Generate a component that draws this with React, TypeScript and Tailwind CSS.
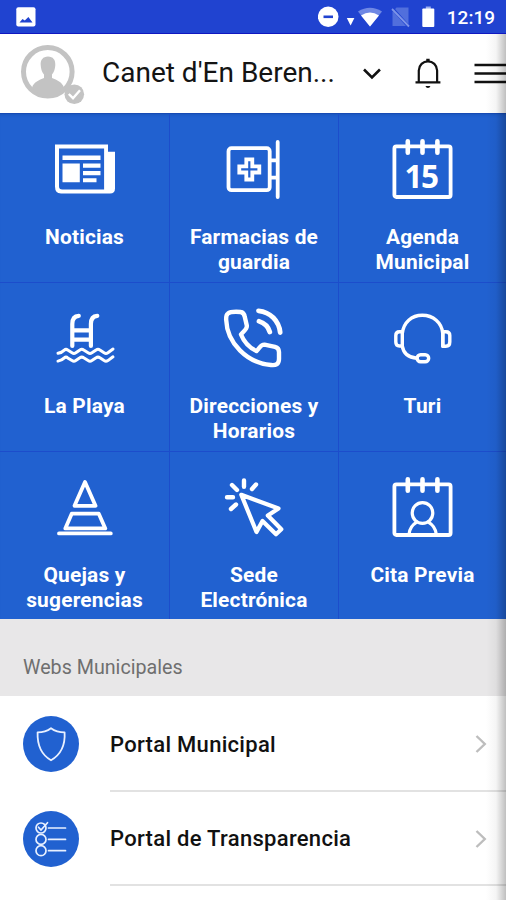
import React from "react";

const Icon = ({ children }: { children: React.ReactNode }) => (
    <svg
        width="64"
        height="64"
        viewBox="0 0 64 64"
        fill="none"
        stroke="white"
        strokeWidth="3.8"
        strokeLinecap="round"
        strokeLinejoin="round"
        className="shrink-0"
    >
        {children}
    </svg>
);

const CalendarFrame = () => (
    <>
        <rect x="3.4" y="9.4" width="56.2" height="50.6" rx="2" />
        <path d="M16.8 4.2v11.5M31.5 4.2v11.5M46.4 4.2v11.5" strokeWidth="4.6" />
    </>
);

const NewsIcon = () => (
    <Icon>
        <path
            d="M2 7.4H55V14.8H62V51.6Q62 56.6 57 56.6H8Q2 56.6 2 49.6ZM6 11.6V49.3Q6 52.6 9.3 52.6H51.1V11.6Z"
            fill="white"
            fillRule="evenodd"
            stroke="none"
        />
        <path
            d="M9.5 18.6H47.5v4.4H9.5ZM9.5 26.6H26.8V45.2H9.5ZM30 26.6H47.5v4.2H30ZM30 34H47.5v4.2H30ZM30 41.3H43.5v4H30Z"
            fill="white"
            stroke="none"
        />
    </Icon>
);

const PharmacyIcon = () => (
    <Icon>
        <rect x="6.5" y="11.2" width="41.2" height="42" rx="3" />
        <path d="M24.3 22.3h6v7h7v6.2h-7v7h-6v-7h-7v-6.2h7Z" strokeLinejoin="miter" />
        <path d="M55.7 5v55M48 23.3h7M48 40.7h7" />
    </Icon>
);

const AgendaIcon = () => (
    <Icon>
        <CalendarFrame />
        <text
            x="30"
            y="51.3"
            textAnchor="middle"
            fill="white"
            stroke="none"
            className="font-['Open_Sans',sans-serif] text-[31.5px] font-bold tracking-[-1.6px]"
        >
            15
        </text>
    </Icon>
);

const BeachIcon = () => (
    <Icon>
        <g transform="translate(-0.5 0)">
            <path d="M19.8 40V18C19.8 13 22 10.2 26.3 9.9M38.4 40V18C38.4 13 40.6 10.2 44.8 9.9M20 24.3h18M20 33.7h18" strokeWidth="4.2" />
            <path
                d="M5.5 47.3Q9.5 46.5 11.8 44.1 13.5 42.5 15.2 44.1L19.5 46.8Q21.4 48 23.3 46.8L27.4 44Q29.3 42.6 31.2 44L35.6 46.8Q37.5 48 39.4 46.8L43.6 44Q45.5 42.6 47.4 44L51.6 46.8Q53.5 48 55.4 46.8L60.5 43"
                strokeWidth="3"
            />
            <path
                d="M5.5 55.1Q9.5 54.3 11.8 51.9 13.5 50.3 15.2 51.9L19.5 54.6Q21.4 55.8 23.3 54.6L27.4 51.8Q29.3 50.4 31.2 51.8L35.6 54.6Q37.5 55.8 39.4 54.6L43.6 51.8Q45.5 50.4 47.4 51.8L51.6 54.6Q53.5 55.8 55.4 54.6L60.5 50.8"
                strokeWidth="3"
            />
        </g>
    </Icon>
);

const PhoneIcon = () => (
    <Icon>
        <path
            d="M5.8 7.7C8 5.8 14 5.6 18.5 6 21.5 6.3 22.3 8 22.8 11L24.8 19.5C25.5 23.5 21 25.5 19 28.5 22 36 28 42 34.5 45 38 42 38.5 38.3 42.5 38.6L53 40.8C56 41.6 57 43 57 46V53C57 58 54 59.6 49 59 25 57 5 37 4.2 14 4 11 4 9 5.8 7.7Z"
            strokeWidth="4.4"
        />
        <path d="M36.5 4.8C48.5 6 57 15 58.2 26.5M37 15.3C42.5 17 46.3 20.8 47.8 26" strokeWidth="4.8" />
    </Icon>
);

const HeadsetIcon = () => (
    <Icon>
        <g strokeWidth="3.4" transform="translate(-0.5 0)">
            <path d="M11.8 41V27.5C13 16.5 21 9.3 31.8 9.3S51.3 16.5 52.3 27.5V40.2" />
            <path d="M11.8 25.7H9Q5.3 25.7 5.3 29.5V36Q5.3 40 9 40H11.8C12.8 47 17 51.5 26.5 52.2" />
            <path d="M52.3 25.7H55.3Q59.3 25.7 59.3 29.5V36Q59.3 40.2 55.3 40.2H52.3Z" />
            <rect x="26.6" y="48.8" width="11.6" height="7" rx="3.5" />
        </g>
    </Icon>
);

const ConeIcon = () => (
    <Icon>
        <path d="M32 7L42.5 30.8H21.5ZM18.7 38.7H45.8L52.3 53.4H12.3ZM6 58.4H57.8" />
    </Icon>
);

const ClickIcon = () => (
    <Icon>
        <path
            d="M5 22.3h6M10 10l5 5M22 5.5v6.2M34 9.5l-4 4.5M9 34l5-4.5"
            strokeWidth="4.4"
        />
        <path d="M19.3 19.8L56.5 33.5 45.8 40.5 59.3 54.2 54 59.3 40.5 46 34.5 57Z" strokeWidth="4.2" />
    </Icon>
);

const AppointmentIcon = () => (
    <Icon>
        <CalendarFrame />
        <circle cx="31.5" cy="38" r="10.3" strokeWidth="3.2" />
        <path d="M18 59.4C18.5 53.9 21.2 49.9 25.7 47.2M45.3 59.4C44.7 53.9 41.9 49.9 37.4 47.2" strokeWidth="3.2" />
    </Icon>
);

const services = [
    { lines: ["Noticias"], icon: NewsIcon },
    { lines: ["Farmacias de", "guardia"], icon: PharmacyIcon },
    { lines: ["Agenda", "Municipal"], icon: AgendaIcon },
    { lines: ["La Playa"], icon: BeachIcon },
    { lines: ["Direcciones y", "Horarios"], icon: PhoneIcon },
    { lines: ["Turi"], icon: HeadsetIcon },
    { lines: ["Quejas y", "sugerencias"], icon: ConeIcon },
    { lines: ["Sede", "Electrónica"], icon: ClickIcon },
    { lines: ["Cita Previa"], icon: AppointmentIcon },
];

const ShieldIcon = () => (
    <svg width="56" height="56" viewBox="0 0 56 56" fill="none" stroke="#e8f0ff" strokeWidth="1.8" strokeLinejoin="round">
        <path d="M28 12.2C24 15.2 19.5 16.4 14.6 16.4 14.2 28 18 38.5 28 44.3 38 38.5 42.3 28 41.6 16.4 36.5 16.4 32 15.2 28 12.2Z" />
    </svg>
);

const ChecklistIcon = () => (
    <svg width="56" height="56" viewBox="0 0 56 56" fill="none" stroke="#e8f0ff" strokeWidth="1.7" strokeLinecap="round">
        <circle cx="18" cy="17" r="5" />
        <circle cx="18" cy="28.4" r="5" />
        <circle cx="18" cy="39.7" r="5" />
        <path d="M15.5 16.2L18 19 24.5 11.7M25.5 17H42.5M25.5 28.4H42.5M25.5 39.7H42.5" />
    </svg>
);

const links = [
    { title: "Portal Municipal", icon: ShieldIcon },
    { title: "Portal de Transparencia", icon: ChecklistIcon },
];

function StatusBar() {
    return (
        <div className="flex h-[34px] items-center justify-between border-b border-[#1018c0] bg-[#2043d0] pl-4 pr-[11px] pt-px">
            <svg width="20" height="20" viewBox="0 0 20 20">
                <rect x="0.3" y="0.3" width="19.2" height="19.2" rx="2" fill="white" />
                <path d="M3.5 15.5L6.5 12l2.3 1.5L12.4 10 16.5 15.5Z" fill="#2043d0" />
            </svg>
            <div className="flex items-center">
                <svg width="118" height="24" viewBox="0 0 118 24">
                    <circle cx="10.2" cy="11.8" r="10.3" fill="white" />
                    <path d="M5.5 11.8h9.5" stroke="#2043d0" strokeWidth="2.6" />
                    <path d="M28.8 13h7.6l-3.8 7.5Z" fill="white" />
                    <path d="M40 6.5Q52 -1 64 6.5L52 21.5Z" fill="#6f88e4" />
                    <path d="M43 10.5Q52 4.5 61 10.5L52 21.5Z" fill="white" />
                    <path d="M78.5 2.5h12v18.5H74.5V7Z" fill="#516fdc" />
                    <path d="M74 3L90.5 21.5" stroke="#2043d0" strokeWidth="3.2" />
                    <path d="M74 4L91 21.5" stroke="#7d94e8" strokeWidth="1.8" />
                    <path d="M107.8 1.5h5v3h-5Z" fill="#9fb0ee" />
                    <rect x="104.3" y="3.5" width="12" height="18.5" rx="1" fill="white" />
                </svg>
                <span className="ml-[11px] text-[19px] font-medium leading-none text-white">12:19</span>
            </div>
        </div>
    );
}

function Header() {
    return (
        <header className="flex h-[79px] items-center bg-white">
            <svg width="64" height="60" viewBox="0 0 64 60" className="ml-[21px] mt-[3px] shrink-0">
                <circle cx="26.8" cy="26.8" r="24.3" fill="white" stroke="#c3c3c3" strokeWidth="5" />
                <path
                    d="M27 11.5C32 11.5 34.7 15 34.3 20 34 25 32.5 27.5 31 29.5V33C36 35 41 37 43 42.5 39 48.5 33 51 27 51S15 48.5 11 42.5C13 37 18 35 23 33V29.5C21.5 27.5 20 25 19.7 20 19.3 15 22 11.5 27 11.5Z"
                    fill="#c3c3c3"
                />
                <circle cx="53.3" cy="49.3" r="9.8" fill="#c3c3c3" />
                <path d="M47.8 49l4.2 4.2 7-8" fill="none" stroke="white" strokeWidth="2.4" />
            </svg>
            <span className="mb-0.5 ml-[17px] w-[234px] whitespace-nowrap text-[28px] text-[#141414]">Canet d'En Beren...</span>
            <svg width="18" height="12" viewBox="0 0 18 12" fill="none" stroke="#111" strokeWidth="2.6" className="ml-7 mt-px">
                <path d="M1 1.5l8 8 8-8" />
            </svg>
            <svg width="26" height="32" viewBox="0 0 26 32" fill="none" stroke="#111" strokeWidth="2.2" className="ml-[34px]">
                <path d="M0.5 24.5H25.5M3.8 24.3V12.5C4 7 8 3.3 13 3.3S22 7 22.2 12.5V24.3" />
                <path d="M13 0.7v3" strokeWidth="3.4" />
                <path d="M10.5 28h5q-.6 2-2.5 2T10.5 28Z" fill="#111" stroke="none" />
            </svg>
            <svg width="32" height="22" viewBox="0 0 32 22" stroke="#111" strokeWidth="2.6" className="ml-[33px] shrink-0">
                <path d="M0.5 2H32M0.5 10.5H32M0.5 19H32" />
            </svg>
        </header>
    );
}

function App() {
    return (
        <div className="relative flex h-[900px] w-[506px] flex-col overflow-hidden bg-white font-[Roboto,sans-serif]">
            <StatusBar />
            <Header />
            <section className="grid h-[506px] grid-cols-[170px_169px_167px] grid-rows-[169px_169px_168px] border-t border-[#174bb5] bg-[#2161d0] shadow-[inset_0_3px_3px_-2px_#1a55bd]">
                {services.map((x, i) => (
                    <div
                        key={i}
                        className="flex flex-col items-center border-b border-r border-[#1c4dcb] pt-[23px] text-center text-white nth-[3n]:border-r-0"
                    >
                        <x.icon />
                        <div className="mt-6 text-[20.9px] font-bold leading-[24.5px] tracking-[0.2px]">
                            {x.lines.map((line) => (
                                <div key={line}>{line}</div>
                            ))}
                        </div>
                    </div>
                ))}
            </section>
            <div className="flex h-[77px] items-center bg-[#e8e7e8] pl-[23px] pt-[21px] text-[19.7px] text-[#6f6f6f]">
                Webs Municipales
            </div>
            <ul className="pt-px">
                {links.map((x, i) => (
                    <li key={i} className="flex h-[94.5px] items-center pl-[23px]">
                        <span className="size-14 shrink-0 rounded-full bg-[#2161d0]">
                            <x.icon />
                        </span>
                        <span className="ml-[31px] flex h-full flex-1 items-center justify-between border-b-2 border-[#e2e2e2] pr-[19px] pt-0.5 text-[22px] font-medium tracking-[0.3px] text-[#111]">
                            {x.title}
                            <svg width="12" height="18" viewBox="0 0 12 18" fill="none" stroke="#bdbdbd" strokeWidth="2.4">
                                <path d="M1.5 1l8.3 8-8.3 8" />
                            </svg>
                        </span>
                    </li>
                ))}
            </ul>
            {/* drawer shadow along the right edge */}
            <div className="pointer-events-none absolute bottom-0 right-0 top-[34px] w-5 bg-linear-to-r from-transparent via-black/4 to-black/25" />
        </div>
    );
}

export default App;
